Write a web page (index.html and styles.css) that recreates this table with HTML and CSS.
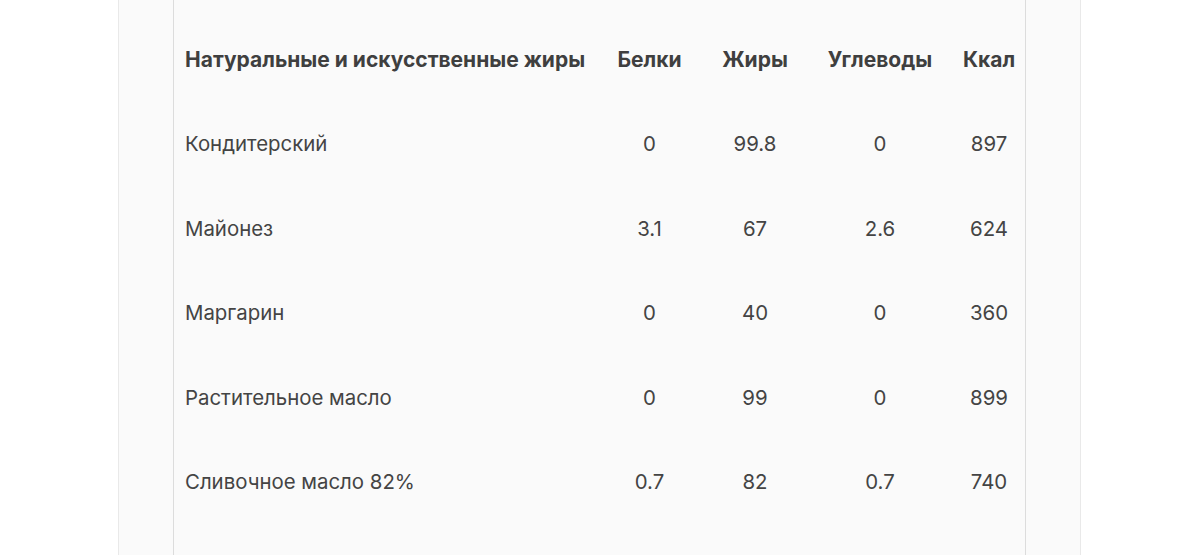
FILE: index.html
```html
<!DOCTYPE html>
<html lang="ru">
<head>
<meta charset="utf-8">
<title>Жиры</title>
<link rel="stylesheet" href="styles.css">
</head>
<body>
<div class="page">
  <div class="panel">
    <table class="nutri">
      <colgroup>
        <col class="c-name">
        <col class="c-b">
        <col class="c-f">
        <col class="c-c">
        <col class="c-k">
      </colgroup>
      <thead>
        <tr>
          <th class="name">Натуральные и искусственные жиры</th>
          <th>Белки</th>
          <th>Жиры</th>
          <th>Углеводы</th>
          <th>Ккал</th>
        </tr>
      </thead>
      <tbody>
        <tr><td class="name">Кондитерский</td><td>0</td><td>99.8</td><td>0</td><td>897</td></tr>
        <tr><td class="name">Майонез</td><td>3.1</td><td>67</td><td>2.6</td><td>624</td></tr>
        <tr><td class="name">Маргарин</td><td>0</td><td>40</td><td>0</td><td>360</td></tr>
        <tr><td class="name">Растительное масло</td><td>0</td><td>99</td><td>0</td><td>899</td></tr>
        <tr><td class="name">Сливочное масло 82%</td><td>0.7</td><td>82</td><td>0.7</td><td>740</td></tr>
      </tbody>
    </table>
  </div>
</div>
</body>
</html>
```
FILE: styles.css
```css
html, body {
  margin: 0;
  padding: 0;
  background: #ffffff;
}
body {
  font-family: "Inter", "Liberation Sans", Arial, sans-serif;
  color: #444444;
}
.page {
  margin-left: 118px;
  min-height: 620px;
  background: #fafafa;
  border-left: 1px solid #e9e9e9;
  border-right: 1px solid #e9e9e9;
  padding: 0 54px;
  box-sizing: content-box;
  width: 853px;
}
.panel {
  border-left: 1px solid #dcdcdc;
  border-right: 1px solid #dcdcdc;
  min-height: 620px;
  padding-top: 17px;
}
.nutri {
  width: 853px;
  border-collapse: collapse;
  table-layout: fixed;
  font-size: 20.4px;
}
.c-name { width: 424px; }
.c-b { width: 103px; }
.c-f { width: 108px; }
.c-c { width: 142px; }
.c-k { width: 76px; }
.nutri th,
.nutri td {
  height: 84.5px;
  padding: 0;
  text-align: center;
  vertical-align: middle;
  white-space: nowrap;
}
.nutri th {
  font-weight: bold;
  font-size: 21px;
  color: #3f3f3f;
}
.nutri .name {
  text-align: left;
  padding-left: 11px;
}
```
